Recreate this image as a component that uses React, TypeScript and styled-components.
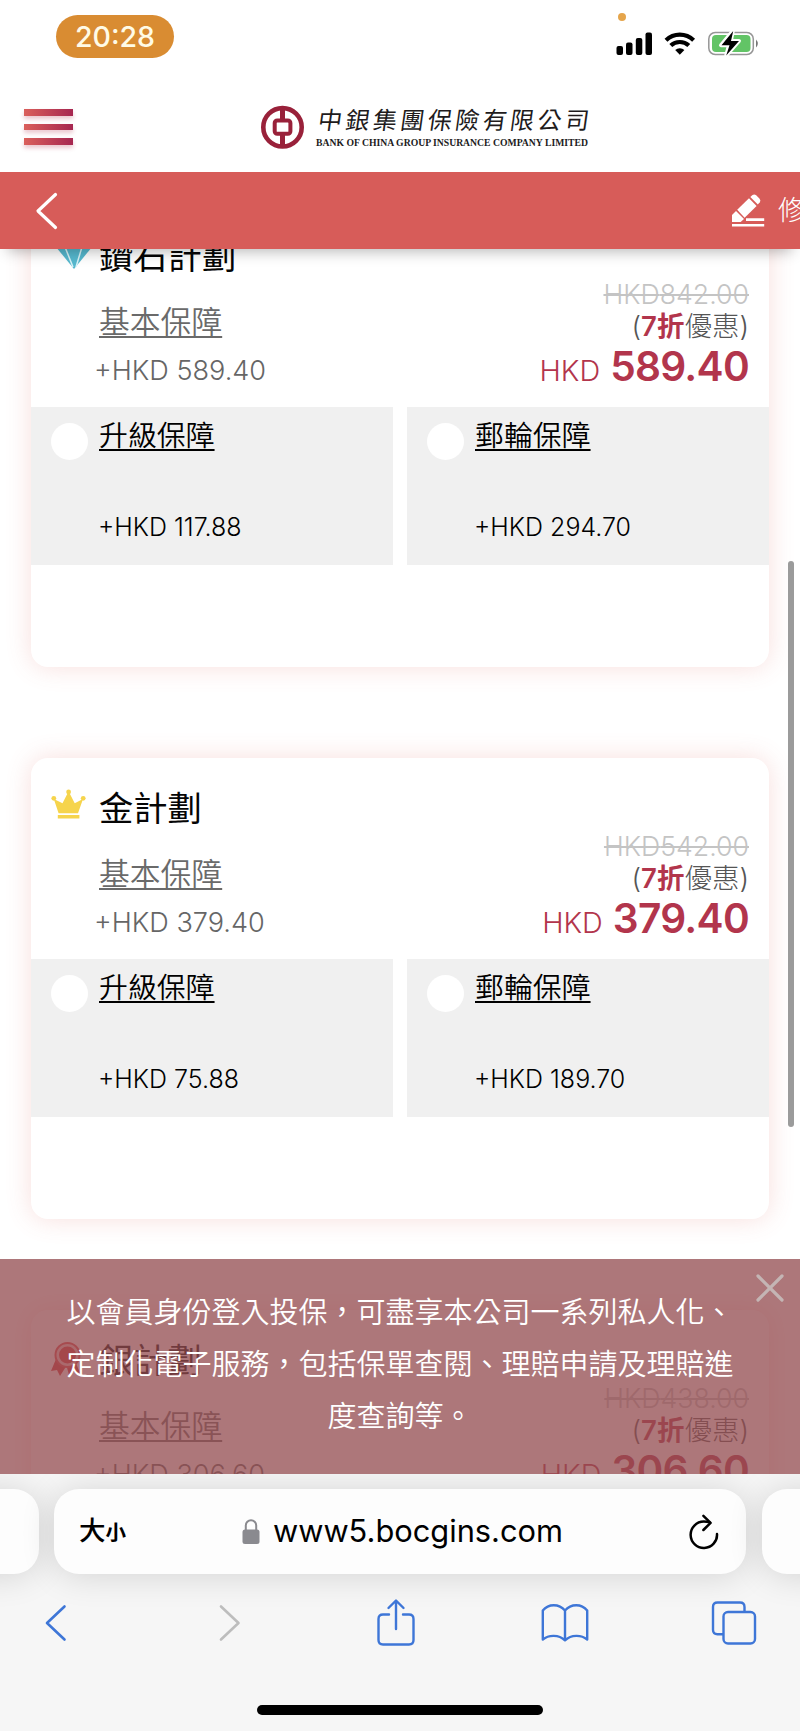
import React from "react";
import styled, { createGlobalStyle } from "styled-components";

const GlobalStyle = createGlobalStyle`
  * { box-sizing: border-box; }
  body { margin: 0; background: #fff; font-family: Inter, "Noto Sans CJK TC", sans-serif; }
  svg { display: block; flex: none; overflow: visible; }
`;

const Phone = styled.div`
  width: 800px;
  height: 1731px;
  display: flex;
  flex-direction: column;
  overflow: hidden;
  background: #fff;
`;

const StatusBar = styled.div`
  height: 84px;
  flex: none;
  display: flex;
  justify-content: space-between;
  padding: 12px 40px 0 56px;
`;

const Clock = styled.div`
  width: 118px;
  height: 43px;
  margin-top: 3px;
  border-radius: 22px;
  background: #d98c32;
  color: #fffbe6;
  font-size: 28.5px;
  font-weight: 500;
  line-height: 43px;
  text-align: center;
`;

const Header = styled.header`
  height: 88px;
  flex: none;
  display: flex;
  align-items: flex-start;
  padding: 18px 0 0 24px;
`;

const MenuButton = styled.div`
  width: 49px;
  display: flex;
  flex-direction: column;
  gap: 8px;
  padding-top: 7px;
  margin-right: 186px;
`;

const MenuLine = styled.span`
  height: 6.6px;
  background: linear-gradient(90deg, #da5f5b, #a62650);
  box-shadow: 0 3px 4px rgba(180, 50, 80, 0.28);
`;

const PlanBar = styled.nav`
  height: 77px;
  flex: none;
  display: flex;
  align-items: center;
  justify-content: space-between;
  background: #d75c59;
  padding-left: 35px;
  position: relative;
  z-index: 2;
  box-shadow: 0 10px 14px -8px rgba(0, 0, 0, 0.3);
`;

const EditAction = styled.div`
  width: 69px;
  display: flex;
  align-items: center;
  gap: 13px;
  overflow: hidden;
  color: #fff;
  font-size: 27px;
  font-weight: 300;
  line-height: 40px;
  white-space: nowrap;
`;

const Content = styled.main`
  height: 1225px;
  flex: none;
  position: relative;
  overflow: hidden;
`;

const Plans = styled.div`
  display: flex;
  flex-direction: column;
  gap: 91px;
  margin-top: -43px;
  padding: 0 31px;
`;

const Card = styled.section`
  height: 461px;
  flex: none;
  background: #fff;
  border-radius: 17px;
  box-shadow: 0 0 26px rgba(222, 90, 80, 0.2);
`;

const CardTop = styled.div`
  height: 201px;
  display: flex;
  justify-content: space-between;
  padding: 26px 20px 0;
`;

const PlanInfo = styled.div`
  display: grid;
  grid-template-columns: 48px auto;
  grid-template-rows: 70px 48px 40px;
`;

const IconSlot = styled.div`
  padding-top: 5px;
`;

const PlanName = styled.h2`
  margin: 0;
  font-size: 34.3px;
  font-weight: 400;
  line-height: 50px;
  color: #050505;
`;

const Underlined = styled.a<{ $basic?: boolean }>`
  grid-column: 2;
  font-size: ${(p) => (p.$basic ? 30.8 : 28.9)}px;
  font-weight: 350;
  line-height: 40px;
  color: ${(p) => (p.$basic ? "#6a6a6a" : "#000")};
  text-decoration: underline;
  text-decoration-thickness: 1.6px;
  text-underline-offset: 3px;
  text-decoration-skip-ink: none;
`;

const BasicPrice = styled.div`
  grid-column: 2;
  margin: 1px 0 0 -5px;
  font-size: 27.1px;
  font-weight: 300;
  line-height: 40px;
  color: #666;
  white-space: nowrap;
`;

const Pricing = styled.div`
  display: flex;
  flex-direction: column;
  align-items: flex-end;
  padding-top: 46px;
  white-space: nowrap;
`;

const OldPrice = styled.div`
  font-size: 26.7px;
  font-weight: 300;
  line-height: 32px;
  color: #c4c4c4;
  text-decoration: line-through;
  text-decoration-thickness: 1.6px;
`;

const Discount = styled.div`
  font-size: 27.5px;
  font-weight: 300;
  line-height: 32px;
  color: #555;
  b { color: #b2354c; font-weight: 600; }
`;

const Total = styled.div`
  display: flex;
  align-items: baseline;
  gap: 10px;
  font-size: 28.8px;
  font-weight: 300;
  line-height: 50px;
  color: #b2354c;
  b { font-size: 40.6px; font-weight: 600; letter-spacing: -0.7px; }
`;

const Options = styled.div`
  display: grid;
  grid-template-columns: 1fr 1fr;
  gap: 14px;
`;

const Option = styled.div`
  height: 158px;
  background: #f0f0f0;
  display: grid;
  grid-template-columns: 48px 1fr;
  align-content: start;
  padding: 9px 0 0 20px;
`;

const Radio = styled.span`
  width: 37px;
  height: 37px;
  margin-top: 7px;
  border-radius: 50%;
  background: #fff;
`;

const OptionPrice = styled.div`
  grid-column: 2;
  margin: 47px 0 0 -1px;
  font-size: 25px;
  font-weight: 350;
  line-height: 40px;
  color: #000;
`;

const ScrollThumb = styled.div`
  position: absolute;
  z-index: 1;
  right: 6px;
  top: 312px;
  width: 6px;
  height: 566px;
  border-radius: 3px;
  background: #9b9b9b;
`;

const Notice = styled.aside`
  position: absolute;
  z-index: 1;
  left: 0;
  right: 0;
  bottom: 0;
  height: 215px;
  padding-top: 28px;
  background: rgba(147, 76, 80, 0.76);
  color: #fff;
  font-size: 29px;
  font-weight: 350;
  line-height: 52px;
  text-align: center;
  white-space: pre-line;
`;

const CloseButton = styled.div`
  position: absolute;
  top: 14px;
  right: 15px;
`;

const Browser = styled.footer`
  height: 257px;
  flex: none;
  display: flex;
  flex-direction: column;
  background: #f6f6f6;
  overflow: hidden;
`;

const AddressRow = styled.div`
  display: flex;
  gap: 15.5px;
  margin: 15px -61.5px 0;
`;

const TabEdge = styled.div`
  width: 100px;
  height: 85px;
  flex: none;
  border-radius: 25px;
  background: #fdfdfd;
  box-shadow: 0 2px 34px rgba(0, 0, 0, 0.14);
`;

const AddressBar = styled(TabEdge)`
  width: 692px;
  display: flex;
  align-items: center;
  padding: 0 26px 0 25px;
`;

const TextSize = styled.div`
  width: 163px;
  display: flex;
  align-items: baseline;
  font-size: 26.5px;
  font-weight: 500;
  line-height: 42px;
  span { font-size: 20.5px; font-weight: 700; }
`;

const Url = styled.div`
  flex: 1;
  margin: -2px 0 0 13px;
  font-size: 30.8px;
  line-height: 40px;
  color: #000;
`;

const Toolbar = styled.div`
  display: grid;
  grid-template-columns: 112px 236px 96px 242px 96px;
  justify-items: center;
  align-items: center;
  height: 60px;
  margin-top: 18.5px;
`;

const HomeIndicator = styled.div`
  width: 286px;
  height: 10px;
  flex: none;
  margin: 52px auto 0;
  border-radius: 5px;
  background: #000;
`;

const StatusIcons = () => (
  <svg width="150" height="50" viewBox="0 0 150 50">
    <circle cx="12" cy="5" r="4" fill="#e5a54b" />
    <rect x="6.5" y="34" width="6.5" height="9" rx="2" />
    <rect x="16" y="30.5" width="6.5" height="12.5" rx="2" />
    <rect x="25.8" y="26" width="6.5" height="17" rx="2" />
    <rect x="35.5" y="20.5" width="6.5" height="22.5" rx="2" />
    <g fill="none" stroke="#000" strokeWidth="4.2">
      <path d="M56 28.2a20 20 0 0 1 27.6 0" />
      <path d="M60.8 33.6a13 13 0 0 1 18 0" />
    </g>
    <path d="M65.2 38a7 7 0 0 1 9.2 0l-4.6 4.8z" />
    <rect x="98.8" y="20.5" width="44.5" height="22" rx="6.5" fill="none" stroke="#969696" strokeWidth="1.5" />
    <rect x="102" y="23" width="38.5" height="17" rx="4" fill="#62c466" />
    <path d="M146 27.5q3.600 4 0 8z" fill="#777" />
    <path d="M122.8 19 111 33.3h8L116.2 43.5 129 29h-8.2z" stroke="#fff" strokeWidth="4" strokeLinejoin="round" />
    <path d="M123.2 19 111.5 33.3h8L116.2 43.5 129 29h-8z" />
  </svg>
);

const Logo = () => (
  <svg width="332" height="50" viewBox="0 0 332 50">
    <g fill="none" stroke="#99213a">
      <circle cx="23.5" cy="25.3" r="19.2" strokeWidth="4.6" />
      <rect x="15.7" y="18.5" width="15.7" height="13.3" rx="2.5" strokeWidth="4" />
      <path d="M23.5 7v11.5M23.5 32v12" strokeWidth="5" />
    </g>
    <g fontFamily='"Noto Sans CJK TC", sans-serif' fontSize="24" fill="#211b1c" transform="translate(58 27) skewX(-8)">
      <text textLength="271" fontWeight="400" lengthAdjust="spacing">中銀集團保險有限公司</text>
    </g>
    <text x="57" y="44.3" fontFamily='"Liberation Serif", serif' fontWeight="700" fontSize="9.8" fill="#211b1c" textLength="272" lengthAdjust="spacingAndGlyphs">BANK OF CHINA GROUP INSURANCE COMPANY LIMITED</text>
  </svg>
);

const Chevron = ({ color, width, flip }: { color: string; width: number; flip?: boolean }) => (
  <svg width="24" height="40" viewBox="0 0 24 40" fill="none" stroke={color} strokeWidth={width} strokeLinecap="round" strokeLinejoin="round">
    <path d={flip ? "M3 3.500 20.500 20 3 36.500" : "M20.500 3.500 3 20 20.500 36.500"} />
  </svg>
);

const EditIcon = () => (
  <svg width="34" height="34" viewBox="0 0 34 34" fill="#fff">
    <path d="m1 21 4-4 8 8-3.400 3H1z" />
    <path d="M6.200 15.800 18 4.300l7.600 7.600-12 11.800z" />
    <path d="m19.300 3 2.200-1.900q1.800-1.400 3.700.2l3.400 3.400q1.500 1.800.2 3.600l-2 2.200z" />
    <path d="M15 25.600h18.200M1 31.200h32.200" stroke="#fff" strokeWidth="2.6" />
  </svg>
);

const DiamondIcon = () => (
  <svg width="42" height="34" viewBox="0 0 42 34">
    <path d="M10 2h26l5 8-18 22L5 10z" fill="#56b9cf" />
    <path d="m14 10 8 20M31 10l-6 20M6 11h34" fill="none" stroke="#d8f3f8" strokeWidth="1.5" />
  </svg>
);

const CrownIcon = () => (
  <svg width="36" height="31" viewBox="0 0 36 31" fill="#f6d44c">
    <circle cx="17.6" cy="3" r="2.4" />
    <circle cx="2.8" cy="9.3" r="2.4" />
    <circle cx="32.2" cy="9.3" r="2.4" />
    <path d="m2.800 10 8.700 4.200L17 3.500h1.200l5.500 10.700L32 10l-5 14.300H7.600zM6.800 26h21.600v3.600H6.800z" />
  </svg>
);

const MedalIcon = () => (
  <svg width="36" height="36" viewBox="0 0 36 36">
    <path d="M5 18 0 30l6-1 3 6 7-11zM24 20l5 12-7-2-4 4-3-11z" fill="#d6383c" />
    <circle cx="16.5" cy="14" r="12" fill="#f3c9c9" stroke="#e2494c" strokeWidth="2" />
    <circle cx="16.5" cy="14" r="8.5" fill="#d8373c" />
  </svg>
);

const LockIcon = () => (
  <svg width="18" height="27" viewBox="0 0 18 27">
    <path d="M3.800 13V7.400a5.200 5.200 0 0 1 10.400 0V13" fill="none" stroke="#8a8a8f" strokeWidth="2" />
    <rect x="0.5" y="11.5" width="17" height="14.5" rx="2.5" fill="#8a8a8f" />
  </svg>
);

const ReloadIcon = () => (
  <svg width="32" height="38" viewBox="0 0 32 38" fill="none" stroke="#000" strokeWidth="2.5" strokeLinecap="round" strokeLinejoin="round">
    <path d="M29 21A13.200 13.200 0 1 1 15.800 8.600q3 0 6 .8" />
    <path d="m15.400 2.800 7.200 7-7.200 7.200" />
  </svg>
);

const ShareIcon = () => (
  <svg width="38" height="50" viewBox="0 0 38 50" fill="none" stroke="#3e76d7" strokeWidth="2.4" strokeLinecap="round" strokeLinejoin="round">
    <path d="M12 16.500H6q-4.500 0-4.500 4.500v21q0 4.500 4.500 4.500h26q4.500 0 4.500-4.500V21q0-4.500-4.500-4.500h-6M19 31V3M11.500 10 19 2.500l7.500 7.500" />
  </svg>
);

const BookIcon = () => (
  <svg width="48" height="40" viewBox="0 0 48 40" fill="none" stroke="#3e76d7" strokeWidth="2.4" strokeLinejoin="round">
    <path d="M24 7.500C18 .5 7.500.5 1.800 7.500V36.500c6-5 16-5 22.200.8 6.200-5.800 16.200-5.800 22.200-.8V7.500C40.500.5 30 .5 24 7.500zM24 7.500v29.500" />
  </svg>
);

const TabsIcon = () => (
  <svg width="46" height="46" viewBox="0 0 46 46" fill="none" stroke="#3e76d7" strokeWidth="2.4">
    <path d="M12 34.200H6.500q-4.500 0-4.500-4.500V7q0-4.500 4.500-4.500H29q4.500 0 4.500 4.500v4.500" />
    <rect x="12.5" y="12" width="31.5" height="31.5" rx="4.5" />
  </svg>
);

interface Plan {
  name: string;
  icon: React.ReactNode;
  old: string;
  price: string;
}

interface PlanWithOptions extends Plan {
  upgrade?: string;
  cruise?: string;
}

const plans: PlanWithOptions[] = [
  { name: "鑽石計劃", icon: <DiamondIcon />, old: "842.00", price: "589.40", upgrade: "117.88", cruise: "294.70" },
  { name: "金計劃", icon: <CrownIcon />, old: "542.00", price: "379.40", upgrade: "75.88", cruise: "189.70" },
  { name: "銀計劃", icon: <MedalIcon />, old: "438.00", price: "306.60" },
];

const PlanCard = ({ plan }: { plan: PlanWithOptions }) => (
  <Card>
    <CardTop>
      <PlanInfo>
        <IconSlot>{plan.icon}</IconSlot>
        <PlanName>{plan.name}</PlanName>
        <Underlined $basic>基本保障</Underlined>
        <BasicPrice>+HKD {plan.price}</BasicPrice>
      </PlanInfo>
      <Pricing>
        <OldPrice>HKD{plan.old}</OldPrice>
        <Discount>(<b>7折</b>優惠)</Discount>
        <Total>HKD <b>{plan.price}</b></Total>
      </Pricing>
    </CardTop>
    {plan.upgrade && (
      <Options>
        <Option>
          <Radio />
          <Underlined>升級保障</Underlined>
          <OptionPrice>+HKD {plan.upgrade}</OptionPrice>
        </Option>
        <Option>
          <Radio />
          <Underlined>郵輪保障</Underlined>
          <OptionPrice>+HKD {plan.cruise}</OptionPrice>
        </Option>
      </Options>
    )}
  </Card>
);

export default function App() {
  return (
    <>
      <GlobalStyle />
      <Phone>
        <StatusBar>
          <Clock>20:28</Clock>
          <StatusIcons />
        </StatusBar>
        <Header>
          <MenuButton>
            <MenuLine />
            <MenuLine />
            <MenuLine />
          </MenuButton>
          <Logo />
        </Header>
        <PlanBar>
          <Chevron color="#fff" width={3.2} />
          <EditAction>
            <EditIcon />
            修
          </EditAction>
        </PlanBar>
        <Content>
          <Plans>
            {plans.map((plan) => (
              <PlanCard key={plan.name} plan={plan} />
            ))}
          </Plans>
          <ScrollThumb />
          <Notice>
            {"以會員身份登入投保，可盡享本公司一系列私人化、\n定制化電子服務，包括保單查閱、理賠申請及理賠進\n度查詢等。"}
            <CloseButton>
              <svg width="30" height="30" viewBox="0 0 30 30" stroke="#c4b5b4" strokeWidth="3.2" strokeLinecap="round">
                <path d="m3 3 24 24M27 3 3 27" />
              </svg>
            </CloseButton>
          </Notice>
        </Content>
        <Browser>
          <AddressRow>
            <TabEdge />
            <AddressBar>
              <TextSize>大<span>小</span></TextSize>
              <LockIcon />
              <Url>www5.bocgins.com</Url>
              <ReloadIcon />
            </AddressBar>
            <TabEdge />
          </AddressRow>
          <Toolbar>
            <Chevron color="#3e76d7" width={2.6} />
            <Chevron color="#bdbdbd" width={2.6} flip />
            <ShareIcon />
            <BookIcon />
            <TabsIcon />
          </Toolbar>
          <HomeIndicator />
        </Browser>
      </Phone>
    </>
  );
}
